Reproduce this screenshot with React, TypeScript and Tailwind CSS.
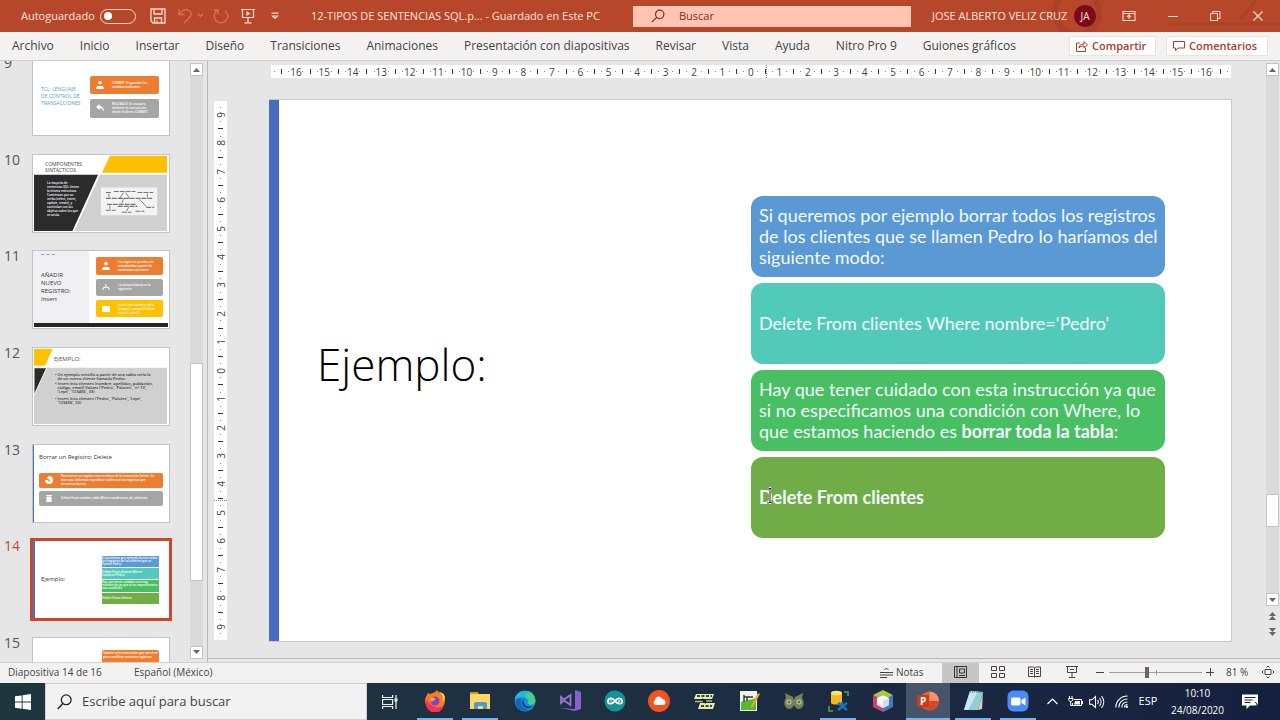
import type { ReactNode } from "react";

const UI = "font-['Open_Sans','Noto_Sans',sans-serif]";
const CALIBRI = "font-['Lato','Open_Sans',sans-serif]";

/* ---------- Title bar ---------- */

function TitleBar() {
  return (
    <header className="relative flex h-8 shrink-0 items-center overflow-hidden bg-[#b7472a] text-[11px] text-[#ffe3d6]">
      <svg className="absolute top-0 right-0 h-8 w-60" viewBox="0 0 240 32" fill="none" aria-hidden="true">
        <circle cx="37" cy="12" r="22" stroke="#ab4226" strokeWidth="6" />
        <path d="M130 24h110M200 20l16-20" stroke="#ab4226" strokeWidth="3" />
      </svg>
      <div className="relative flex flex-1 items-center">
        <label htmlFor="autosave" className="ml-[21px] w-[79px] shrink-0 font-medium whitespace-nowrap">
          Autoguardado
        </label>
        <input
          id="autosave"
          type="checkbox"
          role="switch"
          className="flex h-[15px] w-9 shrink-0 appearance-none items-center rounded-full border border-[#ffd9c9] px-[3px] before:block before:size-2 before:rounded-full before:bg-white"
        />
        <button aria-label="Guardar" className="ml-[14px]">
          <svg width="16" height="16" viewBox="0 0 16 16" fill="none" stroke="#ffd9c9" strokeWidth="1.3">
            <path d="M1 1h14v14H3l-2-2zM4 1v5h8V1M4.500 15v-5h7v5M7 12.500v2.500" />
          </svg>
        </button>
        <button aria-label="Deshacer" className="ml-3">
          <svg width="26" height="16" viewBox="0 0 26 16" fill="none" stroke="#e0704f" strokeWidth="1.3">
            <path d="M1 1v5.500h5.500M1.500 6C4 2 8 .8 11 2.500c3 2 2.500 5 .5 7L6 15M20 6l2.500 2.500L25 6" />
          </svg>
        </button>
        <button aria-label="Rehacer" className="ml-[9px]">
          <svg width="16" height="16" viewBox="0 0 16 16" fill="none" stroke="#e0704f" strokeWidth="1.3">
            <path d="M4 2.500A6.800 6.800 0 1 0 12 2.500M1 2h4v4" />
          </svg>
        </button>
        <button aria-label="Presentación desde el principio" className="ml-3">
          <svg width="14" height="16" viewBox="0 0 14 16" fill="none" stroke="#ffd9c9" strokeWidth="1.2">
            <path d="M0 1.500h14M1.500 1.500v8h11v-8M7 9.500v5M3.500 14.800h7" />
            <path d="M5.500 3l4 2.500-4 2.500z" fill="#ffd9c9" stroke="none" />
          </svg>
        </button>
        <button aria-label="Personalizar barra" className="ml-4">
          <svg width="8" height="8" viewBox="0 0 8 8" fill="none" stroke="#ffd9c9" strokeWidth="1.2">
            <path d="M.5 1.200h7M1.500 4L4 6.500 6.500 4z" />
          </svg>
        </button>
        <h1 className="ml-8 whitespace-nowrap">12-TIPOS DE SENTENCIAS SQL.p... - Guardado en Este PC</h1>
      </div>
      <label className="relative flex h-[21px] w-[278px] shrink-0 items-center bg-[#ffc5b1] pl-[18px]">
        <svg width="14" height="14" viewBox="0 0 14 14" fill="none" stroke="#7d2f1c" strokeWidth="1.200" aria-hidden="true">
          <circle cx="8.700" cy="5.300" r="4.200" />
          <path d="M5.700 8.300L.8 13.200" />
        </svg>
        <input
          aria-label="Buscar"
          placeholder="Buscar"
          className="ml-[14px] min-w-0 flex-1 bg-transparent outline-none placeholder:text-[#7d2f1c]"
        />
      </label>
      <div className="relative flex w-[369px] shrink-0 items-center">
        <span className="ml-[21px] w-[142px] whitespace-nowrap">JOSE ALBERTO VELIZ CRUZ</span>
        <button className="flex size-[22px] items-center justify-center rounded-full bg-[#7c0a1c] text-[10px]">JA</button>
        <button aria-label="Opciones de cinta" className="ml-[26px]">
          <svg width="14" height="12" viewBox="0 0 14 12" fill="none" stroke="#ffd9c9" strokeWidth="1.100">
            <path d="M1 1.500h12v9H1zM1 3.500h12M7 9V5M5 6.800l2-2 2 2" />
          </svg>
        </button>
        <button aria-label="Minimizar" className="ml-8">
          <svg width="10" height="10" viewBox="0 0 10 10" stroke="#ffd9c9"><path d="M0 5.500h10" /></svg>
        </button>
        <button aria-label="Restaurar" className="ml-8">
          <svg width="11" height="10" viewBox="0 0 11 10" fill="none" stroke="#ffd9c9">
            <path d="M.5 2.500h7v7h-7zM2.500 2.500v-2h7.500v7H7.500" />
          </svg>
        </button>
        <button aria-label="Cerrar" className="ml-8">
          <svg width="10" height="10" viewBox="0 0 10 10" stroke="#ffd9c9" strokeWidth="1.200"><path d="M.5.5l9 9M9.500.5l-9 9" /></svg>
        </button>
      </div>
    </header>
  );
}

/* ---------- Ribbon tabs ---------- */

const TABS = [
  "Archivo", "Inicio", "Insertar", "Diseño", "Transiciones", "Animaciones",
  "Presentación con diapositivas", "Revisar", "Vista", "Ayuda", "Nitro Pro 9", "Guiones gráficos",
];

function RibbonTabs() {
  return (
    <nav className="flex h-[29px] shrink-0 items-center justify-between border-b border-[#cfcecd] bg-[#f3f2f1] text-[#444]">
      <div className="flex gap-[26px] pl-3 text-xs">
        {TABS.map((t) => (
          <button key={t} className="whitespace-nowrap">{t}</button>
        ))}
      </div>
      <div className="flex gap-[10px] pr-3 text-[11px] font-semibold text-[#b03a2a]">
        <button className="flex h-5 w-[87px] items-center gap-1 border border-[#e6e4e2] bg-white pl-1.5 whitespace-nowrap">
          <svg width="12" height="12" viewBox="0 0 12 12" fill="none" stroke="#b03a2a">
            <path d="M4 3H.5v8.500h9V8M3 8c.3-3 2-4 5-4V1.500L11.500 5 8 8V6C5.500 6 4 6.500 3 8z" />
          </svg>
          Compartir
        </button>
        <button className="flex h-5 w-[102px] items-center gap-1 border border-[#e6e4e2] bg-white pl-1.5 whitespace-nowrap">
          <svg width="12" height="12" viewBox="0 0 12 12" fill="none" stroke="#b03a2a">
            <path d="M.5 1.500h11v6.500H5L2.500 10.500V8h-2z" />
          </svg>
          Comentarios
        </button>
      </div>
    </nav>
  );
}

/* ---------- Slide thumbnails ---------- */

function MiniCard({ color, icon, children }: { color: string; icon: ReactNode; children: ReactNode }) {
  return (
    <div className={`flex flex-1 items-center gap-2 rounded-xs px-1.5 text-[3px] leading-[4px] font-semibold text-white ${color}`}>
      <svg className="size-2 shrink-0" viewBox="0 0 8 8" fill="white" stroke="white" aria-hidden="true">{icon}</svg>
      <p className="min-w-0">{children}</p>
    </div>
  );
}

const PERSON = <path stroke="none" d="M4 0a1.800 1.800 0 1 1 0 3.600A1.800 1.800 0 0 1 4 0zM1 5h6l1 3H0z" />;
const REPLY = <path stroke="none" d="M0 3l3.500-3v2C6 2 8 4 8 7.500 6.500 5 5.500 4.500 3.500 4.500V6z" />;
const TREE = <path fill="none" d="M4 1v3M1 7V5l3-1 3 1v2" />;
const BOX = <path stroke="none" d="M0 1h8v6H0z" />;
const GLOBE = <path stroke="none" d="M4 0a4 4 0 1 1-4 4h3l1 2 1-2-3-2z" />;
const TRASH = <path stroke="none" d="M1 1h6v1H1zM1.500 2.500h5V8h-5z" />;

function Thumb9() {
  return (
    <div className="flex h-full items-center gap-[7px] pr-2.5 pl-2">
      <p className="w-[42px] text-[5px] leading-[7px] whitespace-nowrap text-[#5b9bc8]">
        TCL: LENGUAJE<br />DE CONTROL DE<br />TRANSACCIONES
      </p>
      <div className="flex h-[42px] flex-1 flex-col gap-[5px]">
        <MiniCard color="bg-[#ed7d31]" icon={PERSON}>COMMIT: Se guardan los cambios realizados.</MiniCard>
        <MiniCard color="bg-[#a5a5a5]" icon={REPLY}>ROLLBACK: Se usa para deshacer la transacción desde el último COMMIT.</MiniCard>
      </div>
    </div>
  );
}

function Thumb10() {
  return (
    <div className="relative h-full">
      <svg className="absolute inset-0 h-full w-full" viewBox="0 0 138 78" preserveAspectRatio="none" aria-hidden="true">
        <path d="M78 1h58v17H70z" fill="#ffc000" />
        <path d="M68 20h68v57H42z" fill="#d0d0d0" />
        <path d="M1 20h65L40 77H1z" fill="#2b2b2b" />
        <path d="M69 33h57v28H69z" fill="#f3f3f3" />
        <path d="M82 37h22M106 38h16M74 38h6M74 44h48M75 50h30M86 52h20M74 56h10M90 58h10M104 57h9M115 53h8" stroke="#777" strokeWidth="1.2" strokeDasharray="5 1" />
        <path d="M77 39v4M88 44l4-6M98 44l-4-6M116 39v4M92 44l-2 5M108 45l7 7M78 51v4M97 53l-2 4" stroke="#555" fill="none" strokeWidth=".7" />
      </svg>
      <p className="relative pt-1.5 pl-3 text-[5px] leading-[6px] text-[#444]">COMPONENTES<br />SINTÁCTICOS</p>
      <p className="relative mt-2 ml-[14px] w-[34px] text-[3px] leading-[4px] font-semibold text-white">
        La mayoría de sentencias SQL tienen la misma estructura. Comienzan por un verbo (select, insert, update, create), y continúan con los objetos sobre los que se actúa.
      </p>
    </div>
  );
}

function Thumb11() {
  return (
    <div className="flex h-full flex-col">
      <div className="flex flex-1">
        <div className="w-14 bg-[#f0f0f3] pl-2">
          <i className="mt-[3px] mb-[3px] block w-3.5 border-t border-dashed border-[#8d9ad6]" />
          <p className="mt-4 text-[6px] leading-[8px] whitespace-nowrap text-[#333]">AÑADIR<br />NUEVO<br />REGISTRO:<br />Insert</p>
        </div>
        <div className="flex flex-1 flex-col gap-1 py-1.5 pr-1.5 pl-[7px]">
          <MiniCard color="bg-[#ed7d31]" icon={PERSON}>Los registros pueden ser introducidos a partir de sentencias con insert.</MiniCard>
          <MiniCard color="bg-[#a5a5a5]" icon={TREE}>La sintaxis básica es la siguiente:</MiniCard>
          <MiniCard color="bg-[#ffc000]" icon={BOX}>Insert Into nombre_tabla (campo1, campo2) Values (valor1, valor2)</MiniCard>
        </div>
      </div>
      <div className="mx-px mb-px h-1 bg-[#262626]" />
    </div>
  );
}

function Thumb12() {
  return (
    <div className="relative h-full">
      <svg className="absolute inset-0 h-full w-full" viewBox="0 0 138 78" preserveAspectRatio="none" aria-hidden="true">
        <path d="M1 20h135v57H1z" fill="#d0d0d0" />
        <path d="M1 20h13L1 48z" fill="#2b2b2b" stroke="#fff" />
        <path d="M1 1h19l-8 17H1z" fill="#ffc000" />
      </svg>
      <p className="relative pt-[7px] pl-[21px] text-[6px] leading-[8px] text-[#555]">EJEMPLO:</p>
      <ul className="relative mt-2.5 ml-[22px] flex flex-col gap-px text-[4px] leading-[4px] font-semibold text-[#333]">
        <li className="flex gap-px whitespace-nowrap"><span>•</span><span>Un ejemplo sencillo a partir de una tabla sería la<br />de un nuevo cliente llamado Pedro:</span></li>
        <li className="flex gap-px whitespace-nowrap"><span>•</span><span>Insert Into clientes (nombre, apellidos, población,<br />código, email) Values ('Pedro', 'Palotes', 'nº 13',<br />'Lepe', '123456', 33)</span></li>
        <li className="mt-0.5 flex gap-px whitespace-nowrap"><span>•</span><span>Insert Into clientes ('Pedro', 'Palotes', 'Lepe',<br />'123456', 33)</span></li>
      </ul>
    </div>
  );
}

function Thumb13() {
  return (
    <div className="flex h-full flex-col border-l border-[#4472c4] pr-1.5 pl-[5px]">
      <p className="mt-2 text-[6px] leading-[8px] font-medium whitespace-nowrap text-[#333]">Borrar un Registro: Delete</p>
      <div className="mt-3 flex h-[33px] flex-col gap-[3px]">
        <MiniCard color="bg-[#ed7d31]" icon={GLOBE}>Para borrar un registro nos servimos de la instrucción Delete. En este caso debemos especificar cuáles son los registros que deseamos borrar.</MiniCard>
        <MiniCard color="bg-[#a5a5a5]" icon={TRASH}>Delete From nombre_tabla Where condiciones_de_selección</MiniCard>
      </div>
    </div>
  );
}

function Thumb14() {
  return (
    <div className="flex h-full items-center justify-between border-l-2 border-[#4472c4] pr-2.5 pl-1.5">
      <p className="text-[6px] text-[#333]">Ejemplo:</p>
      <div className="flex h-12 w-[57px] flex-col gap-px text-[3px] leading-[3px] font-semibold text-white">
        <p className="flex flex-1 items-center bg-[#5b9bd5]">Si queremos por ejemplo borrar todos los registros de los clientes que se llamen Pedro</p>
        <p className="flex flex-1 items-center bg-[#52cab9]">Delete From clientes Where nombre='Pedro'</p>
        <p className="flex flex-1 items-center bg-[#48bf62]">Hay que tener cuidado con esta instrucción ya que si no especificamos una condición</p>
        <p className="flex flex-1 items-center bg-[#70ad47]">Delete From clientes</p>
      </div>
    </div>
  );
}

function Thumb15() {
  return (
    <div className="pt-3 pl-[69px]">
      <p className="h-16 w-[57px] rounded-xs bg-[#ed7d31] p-px text-[3px] leading-[4px] font-semibold text-white">
        Update es la instrucción que nos sirve para modificar nuestros registros.
      </p>
    </div>
  );
}

const SLIDES = [
  { n: 9, view: <Thumb9 /> },
  { n: 10, view: <Thumb10 /> },
  { n: 11, view: <Thumb11 /> },
  { n: 12, view: <Thumb12 /> },
  { n: 13, view: <Thumb13 /> },
  { n: 14, view: <Thumb14 /> },
  { n: 15, view: <Thumb15 /> },
];

function Arrow({ up = false }: { up?: boolean }) {
  return (
    <svg width="7" height="4" viewBox="0 0 7 4" fill="#666" aria-hidden="true">
      <path d={up ? "M0 4h7L3.500 0z" : "M0 0h7L3.500 4z"} />
    </svg>
  );
}

function ScrollButton({ up, label }: { up?: boolean; label: string }) {
  return (
    <button aria-label={label} className="flex h-[13px] w-[13px] shrink-0 items-center justify-center border border-[#c4c4c4] bg-white">
      <Arrow up={up} />
    </button>
  );
}

function SlidePane() {
  return (
    <aside className="-mb-[3px] flex w-52 shrink-0 border-r border-[#b8b8b8]">
      <div className="min-w-0 flex-1 overflow-hidden">
        <ol className="-mt-1 flex h-[659px] flex-col justify-between">
          {SLIDES.map(({ n, view }) => (
            <li key={n} className="flex h-[79px] items-start">
              <span className={`-mt-1 w-8 shrink-0 pl-1 text-sm ${n === 14 ? "text-[#c8472d]" : "text-[#555]"}`}>{n}</span>
              <button
                aria-label={`Diapositiva ${n}`}
                className={`h-[79px] w-[138px] overflow-hidden border border-[#c3c3c3] bg-white text-left ${n === 14 ? "outline-3 -outline-offset-1 outline-[#c8472d] outline-solid" : ""}`}
              >
                {view}
              </button>
            </li>
          ))}
        </ol>
      </div>
      <div className="mt-0.5 mr-1 mb-[3px] flex w-[13px] flex-col items-center bg-[#dadada]">
        <ScrollButton up label="Subir miniaturas" />
        <div className="flex-[288]" />
        <div className="w-[13px] flex-[217] border border-[#c4c4c4] bg-white" />
        <div className="flex-[65]" />
        <ScrollButton label="Bajar miniaturas" />
      </div>
    </aside>
  );
}

/* ---------- Rulers ---------- */

function marks(max: number, lead: string[]) {
  const out = [...lead];
  for (let i = -max; i <= max; i++) {
    out.push(String(Math.abs(i)));
    if (i < max) out.push("·", "|", "·");
  }
  return [...out, ...[...lead].reverse()];
}

function Mark({ value, vertical = false }: { value: string; vertical?: boolean }) {
  return (
    <span className="flex min-h-0 min-w-0 flex-1 items-center justify-center">
      {value === "·" ? (
        <i className="size-px bg-[#888]" />
      ) : value === "|" ? (
        <i className={vertical ? "h-px w-[5px] bg-[#333]" : "h-[5px] w-px bg-[#333]"} />
      ) : (
        <span className={vertical ? "-rotate-90" : ""}>{value}</span>
      )}
    </span>
  );
}

function HorizontalRuler() {
  return (
    <div className="relative mt-1 mr-[33px] ml-[63px] flex h-[13px] shrink-0 bg-white text-[10px] leading-3 text-[#444]">
      {marks(16, ["·", "|", "·"]).map((m, i) => <Mark key={i} value={m} />)}
      <i className="absolute inset-y-0 left-[495px] border-l border-dotted border-[#888]" />
    </div>
  );
}

function VerticalRuler() {
  return (
    <div className="relative my-0.5 ml-1.5 flex w-[13px] shrink-0 flex-col overflow-hidden bg-white text-[10px] leading-3 text-[#444]">
      <div className="-my-1 flex min-h-0 flex-1 flex-col">
        {marks(9, ["|", "·"]).map((m, i) => <Mark key={i} value={m} vertical />)}
      </div>
      <i className="absolute inset-x-0 top-[399px] border-t border-dotted border-[#888]" />
    </div>
  );
}

/* ---------- Slide ---------- */

function Card({ color, children }: { color: string; children: ReactNode }) {
  return (
    <div className={`flex h-[81px] items-center rounded-xl px-2 text-[18px] leading-[21px] whitespace-nowrap text-[#f4faff] ${color}`}>
      <p>{children}</p>
    </div>
  );
}

function Slide() {
  return (
    <section className={`ml-[42px] flex min-w-0 flex-1 items-center border border-l-0 border-[#c8c8c8] bg-white ${CALIBRI}`}>
      <div className="w-2.5 shrink-0 self-stretch bg-[#4a6cc0]" />
      <h2 className="ml-[38px] flex-1 pb-[14px] font-['Open_Sans',sans-serif] text-[44px] font-light text-black">Ejemplo:</h2>
      <div className="mr-[66px] mb-2 flex w-[414px] shrink-0 flex-col gap-1.5">
        <Card color="bg-[#5b99d5]">
          Si queremos por ejemplo borrar todos los registros<br />
          de los clientes que se llamen Pedro lo haríamos del<br />
          siguiente modo:
        </Card>
        <Card color="bg-[#52cab9]">Delete From clientes Where nombre=‘Pedro'</Card>
        <Card color="bg-[#48bf62]">
          Hay que tener cuidado con esta instrucción ya que<br />
          si no especificamos una condición con Where, lo<br />
          que estamos haciendo es <b>borrar toda la tabla</b>:
        </Card>
        <div className="relative">
          <Card color="bg-[#70ad47]"><b>Delete From clientes</b></Card>
          <svg className="absolute top-[30px] left-[15px]" width="8" height="17" viewBox="0 0 8 17" fill="none" aria-hidden="true">
            <path d="M1 1h2l1 1 1-1h2M4 2v13M1 16h2l1-1 1 1h2" stroke="#fff" strokeWidth="2" />
            <path d="M1 1h2l1 1 1-1h2M4 2v13M1 16h2l1-1 1 1h2" stroke="#222" />
          </svg>
        </div>
      </div>
    </section>
  );
}

function Editor() {
  return (
    <main className="flex min-w-0 flex-1 flex-col border-b border-[#b8b8b8]">
      <HorizontalRuler />
      <div className="mt-[21px] mr-8 mb-4 flex min-h-0 flex-1">
        <VerticalRuler />
        <Slide />
      </div>
    </main>
  );
}

function EditorScrollbar() {
  return (
    <div className="flex w-4 shrink-0 flex-col items-center border-b border-[#b8b8b8] pt-0.5 pb-[22px]">
      <ScrollButton up label="Subir" />
      <div className="w-[13px] flex-[420] bg-[#dadada]" />
      <div className="w-[13px] flex-[32] border border-[#c4c4c4] bg-white" />
      <div className="w-[13px] flex-[66] bg-[#dadada]" />
      <ScrollButton label="Bajar" />
      <button aria-label="Diapositiva anterior" className="mt-1.5 flex flex-col"><Arrow up /><Arrow up /></button>
      <button aria-label="Diapositiva siguiente" className="mt-2 flex flex-col"><Arrow /><Arrow /></button>
    </div>
  );
}

/* ---------- Status bar ---------- */

function StatusBar() {
  return (
    <footer className="flex h-[21px] shrink-0 items-center border-t border-[#d4d2d0] bg-[#f3f2f1] pb-0.5 text-[10px] text-[#444]">
      <span className="ml-2 w-[126px] whitespace-nowrap">Diapositiva 14 de 16</span>
      <button className="whitespace-nowrap">Español (México)</button>
      <div className="flex-1" />
      <button className="mr-4 flex w-[46px] items-center gap-[3px]">
        <svg width="13" height="11" viewBox="0 0 13 11" fill="none" stroke="#444" aria-hidden="true">
          <path d="M4.500 3l2-2 2 2M0 5.500h13M0 8h13M0 10.500h7" />
        </svg>
        Notas
      </button>
      <button aria-label="Normal" className="-mb-0.5 flex w-[37px] justify-center self-stretch bg-[#c8c6c4] pt-[3px]">
        <svg width="13" height="12" viewBox="0 0 13 12" fill="none" stroke="#333">
          <path d="M.5.5h12v11H.5zM3 .5v11M5.500 3h5v4h-5zM5 9.500h6" />
        </svg>
      </button>
      <button aria-label="Clasificador" className="flex w-[37px] justify-center">
        <svg width="14" height="12" viewBox="0 0 14 12" fill="none" stroke="#444">
          <path d="M.5.5h5v4h-5zM8.500.5h5v4h-5zM.5 7.500h5v4h-5zM8.500 7.500h5v4h-5z" />
        </svg>
      </button>
      <button aria-label="Vista de lectura" className="flex w-[37px] justify-center">
        <svg width="13" height="12" viewBox="0 0 13 12" fill="none" stroke="#444">
          <path d="M.5 1h5l1 1 1-1h5v9.500h-5l-1 1-1-1h-5zM6.500 2v9M2 3.500h3M2 5.500h3M2 7.500h3M8 3.500h3M8 5.500h3M8 7.500h3" />
        </svg>
      </button>
      <button aria-label="Presentación" className="flex w-[37px] justify-center">
        <svg width="12" height="12" viewBox="0 0 12 12" fill="none" stroke="#444">
          <path d="M0 .5h12M1.500.5v6h9v-6M4 3.500h4M6 6.500v5M3 11.500h6" />
        </svg>
      </button>
      <button aria-label="Alejar" className="ml-1.5">
        <svg width="8" height="8" viewBox="0 0 8 8" stroke="#444"><path d="M0 4.500h8" /></svg>
      </button>
      <div className="relative ml-[5px] flex w-[93px] items-center">
        <input
          type="range"
          aria-label="Zoom"
          min={10}
          max={186}
          defaultValue={81}
          className="h-3 w-full appearance-none bg-transparent bg-[linear-gradient(#a19f9d,#a19f9d)] bg-[length:100%_1px] bg-center bg-no-repeat [&::-webkit-slider-thumb]:h-[11px] [&::-webkit-slider-thumb]:w-1 [&::-webkit-slider-thumb]:appearance-none [&::-webkit-slider-thumb]:bg-[#666]"
        />
        <i className="absolute left-1/2 h-[5px] w-px bg-[#a19f9d]" />
      </div>
      <button aria-label="Acercar" className="ml-1">
        <svg width="8" height="8" viewBox="0 0 8 8" stroke="#444"><path d="M0 4.500h8M4.500 0v8" /></svg>
      </button>
      <button className="ml-3 w-[35px] text-left whitespace-nowrap">81 %</button>
      <button aria-label="Ajustar" className="mr-[5px]">
        <svg width="14" height="14" viewBox="0 0 14 14" fill="none" stroke="#444">
          <path d="M4 4.500h6v5H4zM5.500 2.500L7 1l1.500 1.500M5.500 11.500L7 13l1.500-1.500M2.500 5.500L1 7l1.500 1.500M11.500 5.500L13 7l-1.500 1.500" />
        </svg>
      </button>
    </footer>
  );
}

/* ---------- Windows taskbar ---------- */

const APPS: { name: string; running?: boolean; active?: boolean; icon: ReactNode }[] = [
  {
    name: "Firefox", running: true,
    icon: (
      <>
        <path d="M3 5c0-1 1-2 1-2l2 1 3-1c1-1 3-1 3.500-3 1.500 1 2.500 3 2.500 3l2-1c3 2 4 5 4 8a10 10 0 0 1-20 1c0-3 1-4 2-6z" fill="#ff7a22" />
        <path d="M12.500 0C18 3 20 7 18.500 12c3-2 3-7 0-9l-2 1s-2-3-4-4z" fill="#ffd83d" />
        <path d="M2 12a9 9 0 0 0 18 3c-3 3-8 3-11 1S4 13 3 9z" fill="#f5335a" />
        <circle cx="11" cy="11" r="4.500" fill="#7447c9" />
        <path d="M6 8c3-1 4 0 6 1-2 2-3 1-4 3-1-1-2-2-2-4z" fill="#ffa52e" />
      </>
    ),
  },
  {
    name: "Explorador", running: true,
    icon: (
      <>
        <path d="M1 2h8l1 3H1z" fill="#d69a17" />
        <path d="M1 4h20v15H1z" fill="#ffd766" />
        <path d="M5 19v-6l2-1h9l2 1v6h-4v-3H9v3z" fill="#4d9ad5" />
      </>
    ),
  },
  {
    name: "Edge",
    icon: (
      <>
        <circle cx="11" cy="11" r="10.500" fill="#1c8fdc" />
        <path d="M1 9C3-1 21-3 21.500 11c0 4-6 5-8 2 3-5-6-9-12.500-4z" fill="#3fd08f" />
        <path d="M1 9C3 1 11-1 16 3c-5-1-5 3-4 5-4-2-8-1-11 1z" fill="#24b8d8" />
        <path d="M8 9c-3 5 1 10 8 11C9 24 0 18 1.500 11 3 8 6 8 8 9z" fill="#1267b8" />
        <path d="M10 9c-2 5 3 9 9 7-4 5-11 1-11-3 0-2 1-3 2-4z" fill="#123f84" />
      </>
    ),
  },
  {
    name: "Visual Studio",
    icon: (
      <>
        <path d="M16 0l6 2v17l-6 2-15-3 15 1z" fill="#8662cc" />
        <path d="M2 7v6l3-2.500 6.500 4.500V5L5 9.500z" fill="none" stroke="#9873d8" strokeWidth="1.800" />
      </>
    ),
  },
  {
    name: "Arduino",
    icon: (
      <>
        <circle cx="11" cy="11" r="10.500" fill="#12949a" />
        <path d="M11 11c-2-3-6-4-7 0s5 3 7 0 6-4 7 0-5 3-7 0z" fill="none" stroke="#fff" strokeWidth="1.800" />
        <path d="M6 11h2M14 11h2M15 10v2" stroke="#fff" strokeWidth=".8" />
      </>
    ),
  },
  {
    name: "Nube",
    icon: (
      <>
        <circle cx="11" cy="11" r="11" fill="#f4521e" />
        <path d="M7 15a3 3 0 0 1 0-5c0-4 6-5 7-1 4-1 5 6 1 6z" fill="#fff" />
      </>
    ),
  },
  {
    name: "Simulador",
    icon: (
      <>
        <path d="M3 4h18l-2 5H1zM7 13h15l-2 6H5z" fill="#e3edb2" />
        <path d="M4 6h15M8 16h11" stroke="#3c4a2c" strokeWidth="2" strokeDasharray="3 1.500" />
        <path d="M2 11.500h8M13 11h6" stroke="#a9b39a" strokeWidth="1.500" />
        <path d="M9 9l4 4" stroke="#1c2418" strokeWidth="2" />
      </>
    ),
  },
  {
    name: "Editor",
    icon: (
      <>
        <path d="M2 1h17v20H2z" fill="#eef3e6" />
        <path d="M3 12c5-2 10-2 15-4v12H3z" fill="#58b832" />
        <path d="M6 5v7M6 7h9M9 7v4" stroke="#333" strokeWidth="1.400" />
        <path d="M20 3l2 1-7 13-2 1v-2z" fill="#e9a52a" />
      </>
    ),
  },
  {
    name: "Búhos",
    icon: (
      <>
        <path d="M2 3l4 2 4 2 1 3 1-3 4-2 4-2-1 5c3 4 2 10-3 11-3 0-4-2-5-4-1 2-2 4-5 4-5-1-6-7-3-11z" fill="#75825d" />
        <circle cx="6" cy="12" r="2.700" fill="#a9bc7c" />
        <circle cx="16" cy="12" r="2.700" fill="#a9bc7c" />
        <circle cx="6" cy="12" r="1" fill="#444" />
        <circle cx="16" cy="12" r="1" fill="#444" />
      </>
    ),
  },
  {
    name: "SQL Developer", running: true,
    icon: (
      <>
        <path d="M4 3v10c1 2 10 2 11 0V3z" fill="#f1b91e" />
        <ellipse cx="9.500" cy="3" rx="5.500" ry="2.300" fill="#ffe27a" />
        <path d="M17 2h4v4M2 16v5h4" stroke="#4ea24f" strokeWidth="1.600" fill="none" />
        <path d="M11 13l9 7M20 13l-9 7M15 12v3" stroke="#1c72c4" strokeWidth="2.400" />
      </>
    ),
  },
  {
    name: "NetBeans",
    icon: (
      <>
        <path d="M11 0l10 5-5 3-5-3-5 3-5-3z" fill="#a4c93c" />
        <path d="M1 5l5 3v6l5 3v5L1 17z" fill="#d63f75" />
        <path d="M21 5l-5 3v6l-5 3v5l10-5z" fill="#3f7cc4" />
        <path d="M11 5l6 3v7l-6 3-6-3V8z" fill="#f4f6fa" />
        <path d="M11 11l6-3v7l-6 3z" fill="#d4dbe4" />
      </>
    ),
  },
  {
    name: "PowerPoint", running: true, active: true,
    icon: (
      <>
        <circle cx="12.500" cy="11" r="9.500" fill="#e8623f" />
        <path d="M12.500 1.500A9.500 9.500 0 0 1 22 11h-9.500z" fill="#ff8f6b" />
        <path d="M3 11h19a9.500 9.500 0 0 1-18 4z" fill="#d54a2b" />
        <rect x="0" y="5" width="12" height="12" rx="1" fill="#c43e1c" />
        <text x="3" y="14.500" fontSize="10" fontWeight="700" fill="#fff">P</text>
      </>
    ),
  },
  {
    name: "Bloc de notas", running: true,
    icon: (
      <>
        <path d="M8 1l13 1-5 18H2z" fill="#8fd0d8" />
        <path d="M8 1l8 .6L6 20H2z" fill="#c5ebee" />
        <path d="M21 2l-1 17-4 1z" fill="#d9d2bd" />
        <path d="M8 2h12" stroke="#5f8890" strokeWidth="1.500" strokeDasharray="1 1" />
      </>
    ),
  },
  {
    name: "Zoom", running: true,
    icon: (
      <>
        <rect x=".5" y=".5" width="21" height="21" rx="6" fill="#4a8cff" />
        <rect x="4" y="7.500" width="9.500" height="8" rx="1.800" fill="#fff" />
        <path d="M14.500 10l4-2.500v8l-4-2.500z" fill="#fff" />
      </>
    ),
  },
];

function Taskbar() {
  return (
    <nav className="flex h-[37px] shrink-0 bg-linear-to-r from-[#1e3640] via-[#1e2f42] to-[#16203f] text-white">
      <button aria-label="Inicio" className="flex w-[45px] shrink-0 items-center justify-center">
        <svg width="16" height="16" viewBox="0 0 16 16" fill="#fff">
          <path d="M0 2.300L6.700 1.400v6.200H0zM7.600 1.200L16 0v7.600H7.600zM0 8.500h6.700v6.200L0 13.700zM7.600 8.500H16V16l-8.400-1.200z" />
        </svg>
      </button>
      <label className="flex w-[322px] shrink-0 items-center border border-[#cfcfcf] bg-[#f2f2f2] pl-[11px] text-[#444]">
        <svg width="15" height="16" viewBox="0 0 15 16" fill="none" stroke="#222" strokeWidth="1.300" aria-hidden="true">
          <circle cx="9.200" cy="5.800" r="4.900" />
          <path d="M5.800 9.500L.7 15" />
        </svg>
        <input
          aria-label="Escribe aquí para buscar"
          placeholder="Escribe aquí para buscar"
          className="ml-2.5 min-w-0 flex-1 bg-transparent text-[13px] outline-none placeholder:text-[#444]"
        />
      </label>
      <button aria-label="Vista de tareas" className="flex w-[46px] shrink-0 items-center justify-center">
        <svg width="16" height="14" viewBox="0 0 16 14" fill="none" stroke="#e8eef2" strokeWidth="1.200">
          <path d="M.6 0v2.500h10V0M.6 4.500h10v5h-10zM.6 14v-2.500h10V14M14 0v14" />
          <path d="M12.500 3.500h3v3h-3z" fill="#e8eef2" stroke="none" />
        </svg>
      </button>
      <div className="flex min-w-0 flex-1">
        {APPS.map((a) => (
          <button
            key={a.name}
            aria-label={a.name}
            className={`flex min-w-0 flex-1 flex-col items-center pt-[7px] ${a.active ? "bg-[#46556a]" : ""}`}
          >
            <svg className="size-[22px] shrink-0" viewBox="0 0 22 22">{a.icon}</svg>
            <i className={`mt-auto h-0.5 ${a.active ? "w-full" : "w-9"} ${a.running ? "bg-[#76b5ec]" : ""}`} />
          </button>
        ))}
      </div>
      <div className="flex w-[240px] shrink-0 items-center">
        <button aria-label="Iconos ocultos" className="ml-[7px]">
          <svg width="11" height="7" viewBox="0 0 11 7" fill="none" stroke="#fff" strokeWidth="1.200"><path d="M.5 6l5-5 5 5" /></svg>
        </button>
        <button aria-label="Batería" className="ml-2.5">
          <svg width="15" height="12" viewBox="0 0 15 12" fill="none" stroke="#fff">
            <path d="M5.500 3.500h8v6h-9V7M14.500 5v3" />
            <path d="M7 5h5v3.500H6z" fill="#fff" stroke="none" />
            <path d="M1.500 0v2M4 0v2M.5 2.500h4.500c0 4-4.500 4-4.500 0zM2.700 5v4.500h2" />
          </svg>
        </button>
        <button aria-label="Volumen" className="ml-1.5">
          <svg width="16" height="14" viewBox="0 0 16 14" fill="none" stroke="#fff" strokeWidth="1.100">
            <path d="M.6 4.800h2.400L6.500 1.500v11L3 9.300H.6zM8.500 5c1 1 1 3 0 4M10.500 3c2 2.300 2 5.700 0 8M12.500 1.200c3 3.500 3 8.100 0 11.600" />
          </svg>
        </button>
        <button aria-label="Red" className="ml-2.5">
          <svg width="13" height="13" viewBox="0 0 13 13" fill="none" stroke="#fff" strokeWidth="1.100">
            <path d="M.8 12.500C.8 6 6 1 12.500 1M3.800 12.500c0-5 3.700-8.500 8.700-8.500M6.800 12.500c0-3.500 2.200-5.500 5.700-5.500M9.500 12.500c0-2 1-3 3-3" />
            <circle cx="11.800" cy="11.800" r="1.200" fill="#fff" stroke="none" />
          </svg>
        </button>
        <button className="ml-[10px] w-5 text-[11px] whitespace-nowrap">ESP</button>
        <time className="ml-[7px] flex w-[65px] flex-col items-center text-[10px] leading-[17px] whitespace-nowrap">
          <span>10:10</span>
          <span>24/08/2020</span>
        </time>
        <button aria-label="Notificaciones" className="ml-3">
          <svg width="16" height="16" viewBox="0 0 16 16">
            <path d="M0 .5h16v11h-8L4.500 15v-3.500H0z" fill="#fff" />
            <path d="M2.500 3.500h11M2.500 6h8M2.500 8.500h6" stroke="#1a2442" />
            <path d="M10 14.500a3.500 3.500 0 0 0 3-6.500 3.500 3.500 0 1 1-3 6.500z" fill="#fff" stroke="#1a2442" strokeWidth=".8" />
          </svg>
        </button>
      </div>
    </nav>
  );
}

export default function App() {
  return (
    <div className={`flex h-screen flex-col overflow-hidden bg-[#e6e6e6] ${UI}`}>
      <TitleBar />
      <RibbonTabs />
      <div className="flex min-h-0 flex-1 pb-[3px]">
        <SlidePane />
        <Editor />
        <EditorScrollbar />
      </div>
      <StatusBar />
      <Taskbar />
    </div>
  );
}
